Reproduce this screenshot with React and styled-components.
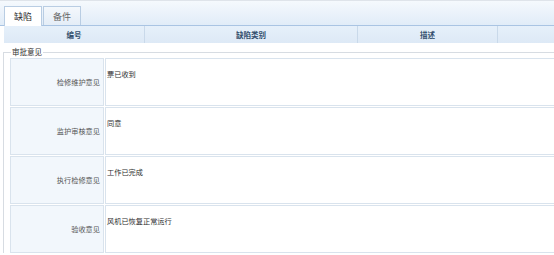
import React from "react";
import styled, { createGlobalStyle } from "styled-components";

const GlobalStyle = createGlobalStyle`
  html, body {
    margin: 0;
    padding: 0;
    background: #ffffff;
    overflow: hidden;
  }
  body {
    font-family: "Noto Sans CJK SC", "Liberation Sans", sans-serif;
  }
`;

const columns = [
  { key: "no", title: "编号", width: 141 },
  { key: "type", title: "缺陷类别", width: 213 },
  { key: "desc", title: "描述", width: 140 },
  { key: "rest", title: "" },
];

const opinions = [
  { label: "检修维护意见", value: "票已收到" },
  { label: "监护审核意见", value: "同意" },
  { label: "执行检修意见", value: "工作已完成" },
  { label: "验收意见", value: "风机已恢复正常运行" },
];

const App = () => {
  return (
    <Page>
      <GlobalStyle />
      <TabBar>
        <Tab active>缺陷</Tab>
        <Tab>备件</Tab>
      </TabBar>
      <HeaderRow>
        {columns.map((c) => (
          <HeaderCell key={c.key} width={c.width}>
            {c.title}
          </HeaderCell>
        ))}
      </HeaderRow>
      <Approval>
        <Legend>审批意见</Legend>
        <OpinionTable>
          {opinions.map((o) => (
            <React.Fragment key={o.label}>
              <LabelCell>{o.label}</LabelCell>
              <ValueCell>{o.value}</ValueCell>
            </React.Fragment>
          ))}
        </OpinionTable>
      </Approval>
    </Page>
  );
};

const Page = styled.div`
  width: 100%;
  height: 255px;
  background: #ffffff;
  overflow: hidden;
`;

const TabBar = styled.div`
  height: 20px;
  padding: 4px 0 0 4px;
  display: flex;
  gap: 1px;
  align-items: flex-end;
  background: linear-gradient(#f5f9fd, #e1ecf8);
  border-top: 1px solid #dfe4ea;
  border-bottom: 1px solid #a9c4e3;
`;

const Tab = styled.div`
  width: 38px;
  height: ${(p) => (p.active ? "20px" : "19px")};
  box-sizing: border-box;
  display: flex;
  align-items: center;
  justify-content: center;
  font-size: 9px;
  color: ${(p) => (p.active ? "#2b2b2b" : "#666666")};
  background: ${(p) =>
    p.active ? "#ffffff" : "linear-gradient(#f4f8fc, #e4edf7)"};
  border: 1px solid #b9cde3;
  border-bottom: none;
  margin-bottom: ${(p) => (p.active ? "-1px" : "0")};
  position: relative;
`;

const HeaderRow = styled.div`
  display: flex;
  height: 17px;
  margin-left: 4px;
  background: linear-gradient(#e6f0fa, #dde9f6);
`;

const HeaderCell = styled.div`
  flex: ${(p) => (p.width ? "none" : "1")};
  width: ${(p) => (p.width ? `${p.width}px` : "auto")};
  box-sizing: border-box;
  display: flex;
  align-items: center;
  justify-content: center;
  font-size: 7.5px;
  font-weight: bold;
  color: #34506e;
  border-right: ${(p) => (p.width ? "1px solid #c9d9ea" : "none")};
`;

const Approval = styled.fieldset`
  margin: 4px 0 0 3px;
  padding: 1px 0 0 6px;
  border: 1px solid #d7dce2;
  border-right: none;
  border-bottom: none;
  min-width: 0;
`;

const Legend = styled.legend`
  font-size: 7.5px;
  line-height: 10px;
  color: #333333;
  padding: 0 1px;
  margin-left: 1px;
`;

const OpinionTable = styled.div`
  display: grid;
  grid-template-columns: 94px 1fr;
  grid-auto-rows: 48px;
  gap: 1px 1px;
`;

const LabelCell = styled.div`
  box-sizing: border-box;
  display: flex;
  align-items: center;
  justify-content: flex-end;
  padding-right: 3px;
  font-size: 7.2px;
  color: #555555;
  background: #f2f7fc;
  border: 1px solid #d9e3ed;
`;

const ValueCell = styled.div`
  box-sizing: border-box;
  padding: 10px 0 0 1px;
  font-size: 7.2px;
  line-height: 10px;
  color: #2e2e2e;
  background: #ffffff;
  border: 1px solid #d9e3ed;
  border-right: none;
`;

export default App;
